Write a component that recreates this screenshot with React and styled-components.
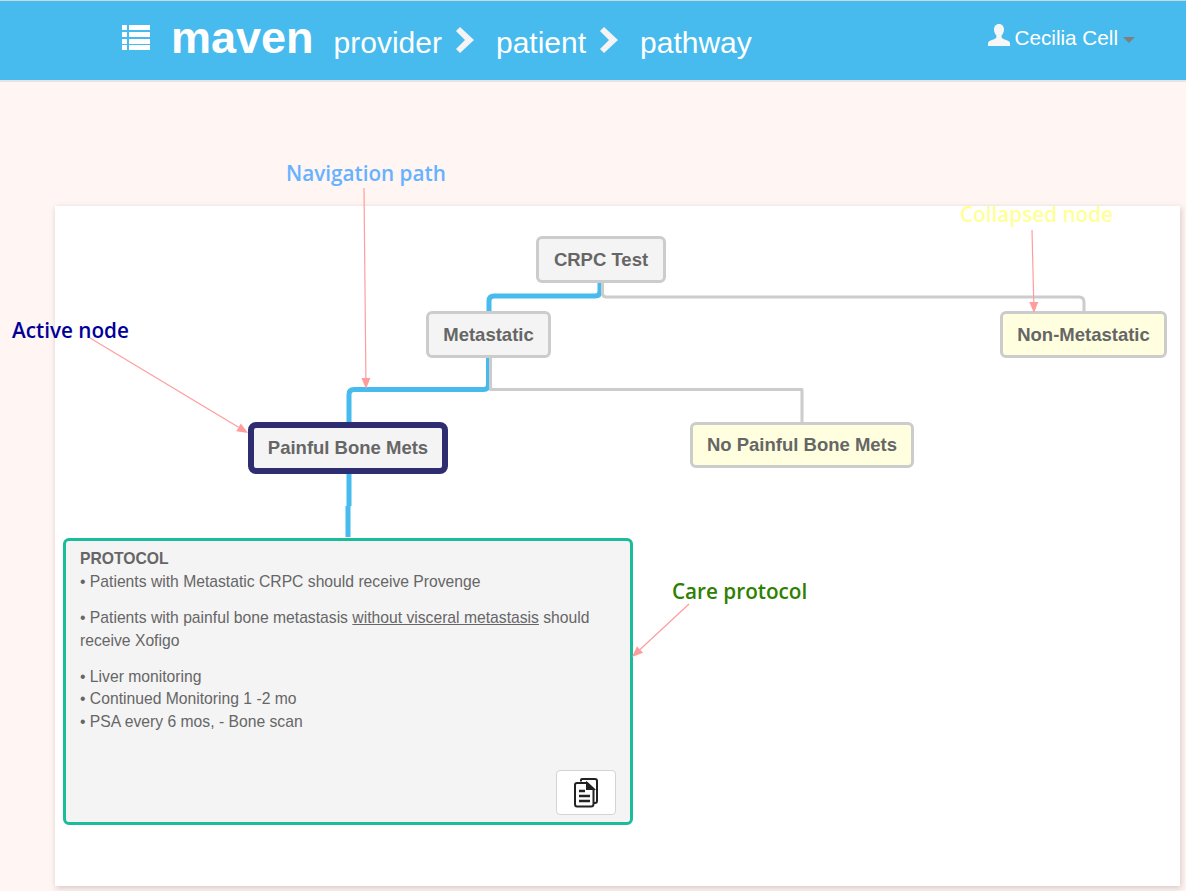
import React from "react";
import styled, { createGlobalStyle } from "styled-components";

const Global = createGlobalStyle`
  html, body { margin: 0; padding: 0; background: #fff5f3; }
  body { font-family: "Liberation Sans", Arial, sans-serif; }
`;

const Page = styled.div`
  position: relative;
  width: 1186px;
  height: 891px;
  overflow: hidden;
  background: #fff5f3;
`;

const Header = styled.header`
  box-sizing: border-box;
  height: 82px;
  display: flex;
  align-items: flex-start;
  background: #47bbee;
  border-top: 1px solid #c9d9e2;
  border-bottom: 2px solid #e4e4e4;
  color: #fff;
`;

const Brand = styled.div`
  display: flex;
  align-items: center;
  height: 79px;
  margin-left: 122px;
`;

const MenuIcon = styled.svg`
  width: 28px;
  height: 26px;
  margin-right: 21px;
  margin-top: -6px;
  fill: #fff;
`;

const Logo = styled.span`
  font-size: 45px;
  font-weight: 700;
  margin-right: 20px;
  margin-top: -6px;
`;

const Crumb = styled.span`
  font-size: 30px;
  margin-top: 4px;
`;

const Chevron = styled.svg`
  width: 20px;
  height: 26px;
  margin: -2px 21px 0 13px;
  fill: #f4f4f4;
`;

const UserMenu = styled.div`
  display: flex;
  align-items: center;
  margin-left: auto;
  margin-right: 51px;
  height: 74px;
  font-size: 20.700px;
`;

const UserIcon = styled.svg`
  width: 22px;
  height: 22px;
  margin-right: 5px;
  margin-top: -6px;
  fill: #f6f6f6;
`;

const Caret = styled.span`
  width: 0;
  height: 0;
  margin-top: 3px;
  margin-left: 5px;
  border-left: 6px solid transparent;
  border-right: 6px solid transparent;
  border-top: 6px solid #7f7f7f;
`;

const Canvas = styled.main`
  position: relative;
  width: 1125px;
  height: 680px;
  margin: 124px 0 0 55px;
  background: #fff;
  box-shadow: 1px 2px 6px rgba(120, 90, 90, 0.3);
`;

const Links = styled.svg`
  position: absolute;
  inset: 0;
  width: 100%;
  height: 100%;
  fill: none;
`;

const Node = styled.div`
  position: absolute;
  box-sizing: border-box;
  left: ${p => p.$x}px;
  top: ${p => p.$y}px;
  width: ${p => p.$w}px;
  height: ${p => p.$h}px;
  display: flex;
  align-items: center;
  justify-content: center;
  border: ${p => (p.$active ? "6px solid #2e2d72" : "3px solid #cccccc")};
  border-radius: ${p => (p.$active ? 8 : 6)}px;
  background: ${p => (p.$collapsed ? "#ffffe0" : "#f4f4f4")};
  color: #666;
  font-size: 18.500px;
  font-weight: 700;
  white-space: nowrap;
`;

const Protocol = styled.section`
  position: absolute;
  box-sizing: border-box;
  left: 8px;
  top: 332px;
  width: 570px;
  height: 287px;
  padding: 7.400px 14px;
  border: 3px solid #1abc9c;
  border-radius: 6px;
  background: #f4f4f4;
  color: #666;
  font-size: 15.700px;
  line-height: 22.800px;
`;

const ProtocolTitle = styled.div`
  font-weight: 700;
`;

const Para = styled.p`
  margin: 0 0 13px;
`;

const Underlined = styled.span`
  text-decoration: underline;
`;

const DocButton = styled.button`
  position: absolute;
  right: 14px;
  bottom: 7px;
  box-sizing: border-box;
  width: 60px;
  height: 45px;
  display: flex;
  align-items: center;
  justify-content: center;
  padding: 0;
  background: #fff;
  border: 1px solid #d4d4d4;
  border-radius: 4px;
`;

const Arrows = styled.svg`
  position: absolute;
  inset: 0;
  width: 1186px;
  height: 891px;
  pointer-events: none;
`;

const Note = styled.div`
  position: absolute;
  left: ${p => p.$x}px;
  top: ${p => p.$y}px;
  color: ${p => p.$color};
  font-family: "Open Sans", "Noto Sans", sans-serif;
  font-size: 20.700px;
  line-height: 26px;
  font-weight: 600;
  white-space: nowrap;
`;

const Arrow = ({ x1, y1, x2, y2 }) => {
  const a = Math.atan2(y2 - y1, x2 - x1);
  const l = 11, w = 4.5;
  const bx = x2 - l * Math.cos(a), by = y2 - l * Math.sin(a);
  const px = -Math.sin(a) * w, py = Math.cos(a) * w;
  return (
    <g>
      <line x1={x1} y1={y1} x2={bx} y2={by} stroke="#ff9d9d" strokeWidth="1.2" />
      <polygon points={`${x2},${y2} ${bx + px},${by + py} ${bx - px},${by - py}`} fill="#ff9d9d" />
    </g>
  );
};

export default function App() {
  return (
    <Page>
      <Global />
      <Header>
        <Brand>
          <MenuIcon viewBox="0 0 28 26">
            <rect x="0" y="0" width="5" height="5" />
            <rect x="7" y="0" width="21" height="5" />
            <rect x="0" y="7" width="5" height="5" />
            <rect x="7" y="7" width="21" height="5" />
            <rect x="0" y="14" width="5" height="5" />
            <rect x="7" y="14" width="21" height="5" />
            <rect x="0" y="20" width="5" height="5" />
            <rect x="7" y="20" width="21" height="5" />
          </MenuIcon>
          <Logo>maven</Logo>
          <Crumb>provider</Crumb>
          <Chevron viewBox="0 0 20 26"><path d="M5 0 L19 13 L5 26 L1 22 L10 13 L1 4 Z" /></Chevron>
          <Crumb>patient</Crumb>
          <Chevron viewBox="0 0 20 26"><path d="M5 0 L19 13 L5 26 L1 22 L10 13 L1 4 Z" /></Chevron>
          <Crumb>pathway</Crumb>
        </Brand>
        <UserMenu>
          <UserIcon viewBox="0 0 22 22">
            <path d="M11 0c3.200 0 5 2.400 5 5.600 0 2.400-1 4.600-2.400 5.800v1.800c0 .8 1 1.400 3.200 2.200 2.800 1 5.200 2 5.200 3.600V22H0v-3c0-1.600 2.400-2.600 5.200-3.600 2.200-.8 3.200-1.400 3.200-2.200v-1.800C7 10.200 6 8 6 5.600 6 2.400 7.800 0 11 0z" />
          </UserIcon>
          Cecilia Cell
          <Caret />
        </UserMenu>
      </Header>
      <Canvas>
        <Links>
          <path d="M545 77 V85 Q545 90 540 90 H439 Q434 90 434 95 V105" stroke="#47bbee" strokeWidth="5" />
          <path d="M547.500 77 V87 Q547.500 91 551.500 91 H1024 Q1029 91 1029 96 V105" stroke="#cccccc" strokeWidth="3" />
          <path d="M433.500 152 V178.500 Q433.500 183.500 428.500 183.500 H299 Q294 183.500 294 188.500 V216" stroke="#47bbee" strokeWidth="5" />
          <path d="M435.500 152 V183.500 H747 V216" stroke="#cccccc" strokeWidth="3" strokeLinejoin="round" />
          <path d="M294 268 V300 M293 300 V331" stroke="#47bbee" strokeWidth="5" />
        </Links>
        <Node $x={481} $y={30} $w={130} $h={47}>CRPC Test</Node>
        <Node $x={371} $y={105} $w={125} $h={47}>Metastatic</Node>
        <Node $x={945} $y={105} $w={167} $h={47} $collapsed>Non-Metastatic</Node>
        <Node $x={193} $y={216} $w={200} $h={52} $active>Painful Bone Mets</Node>
        <Node $x={635} $y={216} $w={224} $h={46} $collapsed>No Painful Bone Mets</Node>
        <Protocol>
          <ProtocolTitle>PROTOCOL</ProtocolTitle>
          <Para>• Patients with Metastatic CRPC should receive Provenge</Para>
          <Para>
            • Patients with painful bone metastasis <Underlined>without visceral metastasis</Underlined> should receive Xofigo
          </Para>
          <div>• Liver monitoring</div>
          <div>• Continued Monitoring 1 -2 mo</div>
          <div>• PSA every 6 mos, - Bone scan</div>
          <DocButton aria-label="Documents">
            <svg width="24" height="30" viewBox="0 0 24 30" fill="none" stroke="#222" strokeWidth="2">
              <path d="M7 3.500 V2 Q7 1 8 1 H21 Q23 1 23 3 V23 Q23 25 21 25 H19.500" />
              <path d="M3 5 H13 L19.500 11 V26 Q19.500 28.500 17 28.500 H3 Q1 28.500 1 26 V7 Q1 5 3 5 Z" />
              <path d="M13 5 L19.500 11 H13 Z" fill="#222" />
              <path d="M5 13 H11 M5 18 H16 M5 23 H16" strokeWidth="2.500" />
            </svg>
          </DocButton>
        </Protocol>
      </Canvas>
      <Arrows viewBox="0 0 1186 891">
        <Arrow x1={364} y1={188} x2={366} y2={389} />
        <Arrow x1={1032} y1={230} x2={1034} y2={313} />
        <Arrow x1={90} y1={338} x2={248} y2={433} />
        <Arrow x1={689} y1={604} x2={632} y2={657} />
      </Arrows>
      <Note $x={286} $y={160} $color="#66b2ff">Navigation path</Note>
      <Note $x={960} $y={201} $color="#ffff99">Collapsed node</Note>
      <Note $x={12} $y={317} $color="#000099">Active node</Note>
      <Note $x={672} $y={578} $color="#2e8000">Care protocol</Note>
    </Page>
  );
}
